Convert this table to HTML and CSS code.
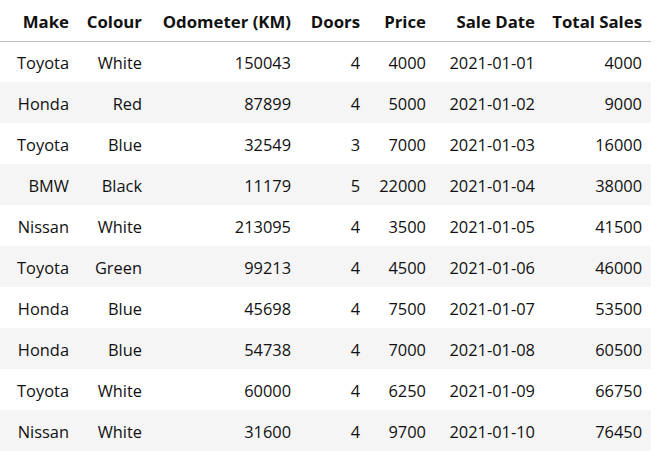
FILE: index.html
```html
<!DOCTYPE html>
<html>
<head>
<meta charset="utf-8">
<link rel="stylesheet" href="styles.css">
</head>
<body>
<table class="df">
  <colgroup>
    <col class="c-make"><col class="c-colour"><col class="c-odo"><col class="c-doors"><col class="c-price"><col class="c-date"><col class="c-total">
  </colgroup>
  <thead>
    <tr><th>Make</th><th>Colour</th><th>Odometer (KM)</th><th>Doors</th><th>Price</th><th>Sale Date</th><th>Total Sales</th></tr>
  </thead>
  <tbody>
    <tr><td>Toyota</td><td>White</td><td>150043</td><td>4</td><td>4000</td><td>2021-01-01</td><td>4000</td></tr>
    <tr><td>Honda</td><td>Red</td><td>87899</td><td>4</td><td>5000</td><td>2021-01-02</td><td>9000</td></tr>
    <tr><td>Toyota</td><td>Blue</td><td>32549</td><td>3</td><td>7000</td><td>2021-01-03</td><td>16000</td></tr>
    <tr><td>BMW</td><td>Black</td><td>11179</td><td>5</td><td>22000</td><td>2021-01-04</td><td>38000</td></tr>
    <tr><td>Nissan</td><td>White</td><td>213095</td><td>4</td><td>3500</td><td>2021-01-05</td><td>41500</td></tr>
    <tr><td>Toyota</td><td>Green</td><td>99213</td><td>4</td><td>4500</td><td>2021-01-06</td><td>46000</td></tr>
    <tr><td>Honda</td><td>Blue</td><td>45698</td><td>4</td><td>7500</td><td>2021-01-07</td><td>53500</td></tr>
    <tr><td>Honda</td><td>Blue</td><td>54738</td><td>4</td><td>7000</td><td>2021-01-08</td><td>60500</td></tr>
    <tr><td>Toyota</td><td>White</td><td>60000</td><td>4</td><td>6250</td><td>2021-01-09</td><td>66750</td></tr>
    <tr><td>Nissan</td><td>White</td><td>31600</td><td>4</td><td>9700</td><td>2021-01-10</td><td>76450</td></tr>
  </tbody>
</table>
</body>
</html>
```
FILE: styles.css
```css
html, body {
  margin: 0;
  padding: 0;
  background: #fff;
}
.df {
  border-collapse: collapse;
  table-layout: fixed;
  width: 651px;
  font-family: "Open Sans", "Noto Sans", sans-serif;
  font-size: 16.4px;
  color: #111;
}
.c-make { width: 78px; }
.c-colour { width: 73px; }
.c-odo { width: 149px; }
.c-doors { width: 69px; }
.c-price { width: 66px; }
.c-date { width: 109px; }
.c-total { width: 107px; }
.df th, .df td {
  text-align: right;
  padding: 2px 9px 0 0;
  white-space: nowrap;
  vertical-align: middle;
}
.df th {
  font-weight: 700;
  font-size: 16.8px;
  border-bottom: 1px solid #bdbdbd;
}
.df thead tr {
  height: 41px;
}
.df tbody tr {
  height: 41px;
}
.df tbody tr:nth-child(even) {
  background: #f5f5f5;
}
```
